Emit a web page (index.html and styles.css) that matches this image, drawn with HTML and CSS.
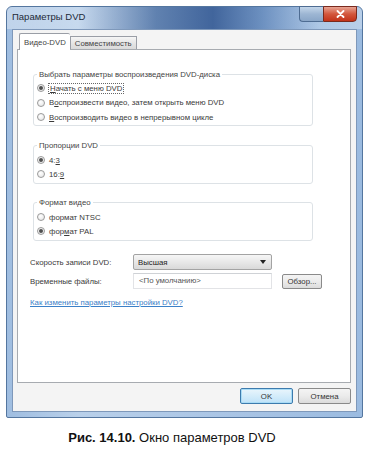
FILE: index.html
```html
<!DOCTYPE html>
<html lang="ru">
<head>
<meta charset="utf-8">
<title>Параметры DVD</title>
<link rel="stylesheet" href="styles.css">
</head>
<body>
<div class="window">
  <div class="titlebar">
    <span class="title">Параметры DVD</span>
    <div class="caption-buttons">
      <span class="cbtn help"></span>
      <span class="cbtn close"><svg width="9" height="8" viewBox="0 0 9 8"><path d="M1.5 1 L7.5 7 M7.5 1 L1.5 7" stroke="#fff" stroke-width="1.8" stroke-linecap="round"/></svg></span>
    </div>
  </div>
  <div class="client">
    <div class="tabs">
      <span class="tab active">Видео-DVD</span>
      <span class="tab">Совместимость</span>
    </div>
    <div class="panel">
      <fieldset class="group g1">
        <legend>Выбрать параметры воспроизведения DVD-диска</legend>
        <div class="radio"><span class="dot checked"></span><span class="focus"><u>Н</u>ачать с меню DVD</span></div>
        <div class="radio"><span class="dot"></span><span>В<u>о</u>спроизвести видео, затем открыть меню DVD</span></div>
        <div class="radio"><span class="dot"></span><span><u>В</u>оспроизводить видео в непрерывном цикле</span></div>
      </fieldset>
      <fieldset class="group g2">
        <legend>Пропорции DVD</legend>
        <div class="radio"><span class="dot checked"></span><span>4:<u>3</u></span></div>
        <div class="radio"><span class="dot"></span><span>16:<u>9</u></span></div>
      </fieldset>
      <fieldset class="group g3">
        <legend>Формат видео</legend>
        <div class="radio"><span class="dot"></span><span>формат NTSC</span></div>
        <div class="radio"><span class="dot checked"></span><span>фор<u>м</u>ат PAL</span></div>
      </fieldset>
      <div class="form">
        <span class="flabel">Скорость записи DVD:</span>
        <div class="select"><span>Высшая</span><span class="arrow"></span></div>
        <span></span>
        <span class="flabel">Временные файлы:</span>
        <div class="input">&lt;По умолчанию&gt;</div>
        <span class="btn browse">Обзор...</span>
      </div>
      <a class="link" href="#">Как изменить параметры настройки DVD?</a>
    </div>
    <div class="footer">
      <span class="btn default">OK</span>
      <span class="btn">Отмена</span>
    </div>
  </div>
</div>
<p class="fig"><b>Рис. 14.10.</b> Окно параметров DVD</p>
</body>
</html>
```

FILE: styles.css
```css
* { box-sizing: border-box; }
body {
  margin: 0;
  background: #fff;
  font-family: "Liberation Sans", Arial, sans-serif;
  color: #3a3a3a;
}
.window {
  margin: 6px 0 0 6px;
  width: 357px;
  height: 412px;
  border: 1px solid #54769f;
  border-radius: 6px 6px 2px 2px;
  background: linear-gradient(90deg, #9fbde0 0%, #b9d0ea 20%, #aac5e5 60%, #9bbbe0 100%);
  padding: 0 5px 5px 5px;
  display: flex;
  flex-direction: column;
}
.titlebar {
  height: 22px;
  flex: none;
  display: flex;
  align-items: flex-start;
  justify-content: space-between;
  background: linear-gradient(90deg, rgba(255,255,255,0.35) 0%, rgba(255,255,255,0.2) 20%, rgba(30,70,130,0.55) 42%, rgba(20,60,125,0.7) 58%, rgba(40,85,150,0.45) 72%, rgba(255,255,255,0.15) 88%, rgba(255,255,255,0.3) 100%);
  margin: 0 -5px;
  padding: 0 5px;
  border-radius: 5px 5px 0 0;
}
.title {
  font-size: 9.5px;
  line-height: 12px;
  margin-top: 4px;
  color: #1e2a38;
}
.caption-buttons {
  display: flex;
  margin-top: -1px;
}
.cbtn {
  height: 16px;
  border: 1px solid #4e6c92;
  display: flex;
  align-items: center;
  justify-content: center;
}
.help {
  width: 24px;
  border-right: none;
  border-radius: 0 0 0 4px;
  background: linear-gradient(#c4d6ea, #9db6d3 50%, #8aa6c8);
}
.close {
  width: 34px;
  border-radius: 0 0 4px 0;
  background: linear-gradient(#e8a493, #d3573d 50%, #c2331a);
  border-color: #7a2a1e;
}
.client {
  flex: 1;
  background: #f4f4f4;
  border: 1px solid #7e98ba;
  display: flex;
  flex-direction: column;
  padding: 2px 5px 0 4px;
}
.tabs {
  display: flex;
  align-items: flex-end;
  padding-left: 2px;
  height: 18px;
  flex: none;
  font-size: 7.8px;
}
.tab {
  height: 14px;
  line-height: 13px;
  padding: 0 4px;
  border: 1px solid #9a9ea6;
  border-bottom: none;
  background: linear-gradient(#f6f6f6, #e3e3e3 55%, #d8d8d8);
  color: #444;
}
.tab.active {
  height: 17px;
  line-height: 17px;
  padding: 0 4px;
  background: #fff;
  position: relative;
  z-index: 1;
  border-right: none;
  border-radius: 2px 2px 0 0;
}
.panel {
  flex: 1;
  margin-top: -1px;
  background: #fff;
  border: 1px solid #a7abb0;
  padding: 19px 0 0 12px;
  display: flex;
  flex-direction: column;
  align-items: flex-start;
  font-size: 7.8px;
}
.group {
  margin: 0 0 0 3px;
  width: 280px;
  border: 1px solid #dde2e6;
  border-radius: 3px;
  padding: 1px 0 0.5px 3px;
}
.group legend {
  padding: 0 2px;
  line-height: 11px;
  color: #444;
}
.g2 { margin-top: 14px; padding-top: 2px; padding-bottom: 2px; }
.g3 { margin-top: 13px; padding-top: 2px; padding-bottom: 2px; }
.radio {
  display: flex;
  align-items: center;
  height: 14.5px;
  gap: 4px;
  color: #3a3a3a;
}
.g2 .radio, .g3 .radio { height: 14px; }
.dot {
  width: 8px;
  height: 8px;
  border-radius: 50%;
  border: 1px solid #9a9a9a;
  background: radial-gradient(circle at 40% 35%, #ffffff, #e2e2e2);
  display: flex;
  align-items: center;
  justify-content: center;
}
.dot.checked::after {
  content: "";
  width: 4px;
  height: 4px;
  border-radius: 50%;
  background: #505050;
}
.focus {
  outline: 1px dotted #666;
  outline-offset: 0;
  padding: 0 1px;
}
.form {
  margin-top: 13px;
  display: grid;
  grid-template-columns: 93px 139px 40px;
  column-gap: 10px;
  row-gap: 3px;
  align-items: center;
}
.flabel { color: #3a3a3a; }
.select {
  height: 16px;
  border: 1px solid #a3a3a3;
  border-radius: 2px;
  background: linear-gradient(#f6f6f6, #e8e8e8 50%, #d9d9d9);
  display: flex;
  align-items: center;
  justify-content: space-between;
  padding: 0 5px 0 4px;
  color: #222;
}
.arrow {
  width: 0;
  height: 0;
  border-left: 3px solid transparent;
  border-right: 3px solid transparent;
  border-top: 4px solid #222;
}
.input {
  height: 16px;
  border: 1px solid #e2e3e6;
  border-top-color: #cfd2d6;
  line-height: 14px;
  padding-left: 5px;
  color: #555;
}
.btn {
  display: flex;
  align-items: center;
  justify-content: center;
  height: 16px;
  border: 1px solid #8a8a8a;
  border-radius: 2px;
  background: linear-gradient(#f4f4f4, #ebebeb 50%, #dcdcdc);
  color: #333;
  font-size: 7.8px;
}
.browse { height: 15px; }
.link {
  margin-top: 8px;
  color: #3b80c8;
  line-height: 11px;
  text-decoration: underline;
}
.footer {
  flex: none;
  display: flex;
  justify-content: flex-end;
  gap: 5px;
  padding: 5px 0 7px;
}
.footer .btn { width: 53px; }
.footer .btn.default {
  border-color: #3d7bad;
  background: linear-gradient(#e9f5fc, #d4ecfa 50%, #bfe2f8);
  box-shadow: inset 0 0 0 1px #a9dcf6;
}
.fig {
  margin: 12px 0 0;
  width: 344px;
  text-align: center;
  font-size: 13px;
  line-height: 15px;
  color: #111;
}
.fig b { font-weight: bold; }
```
